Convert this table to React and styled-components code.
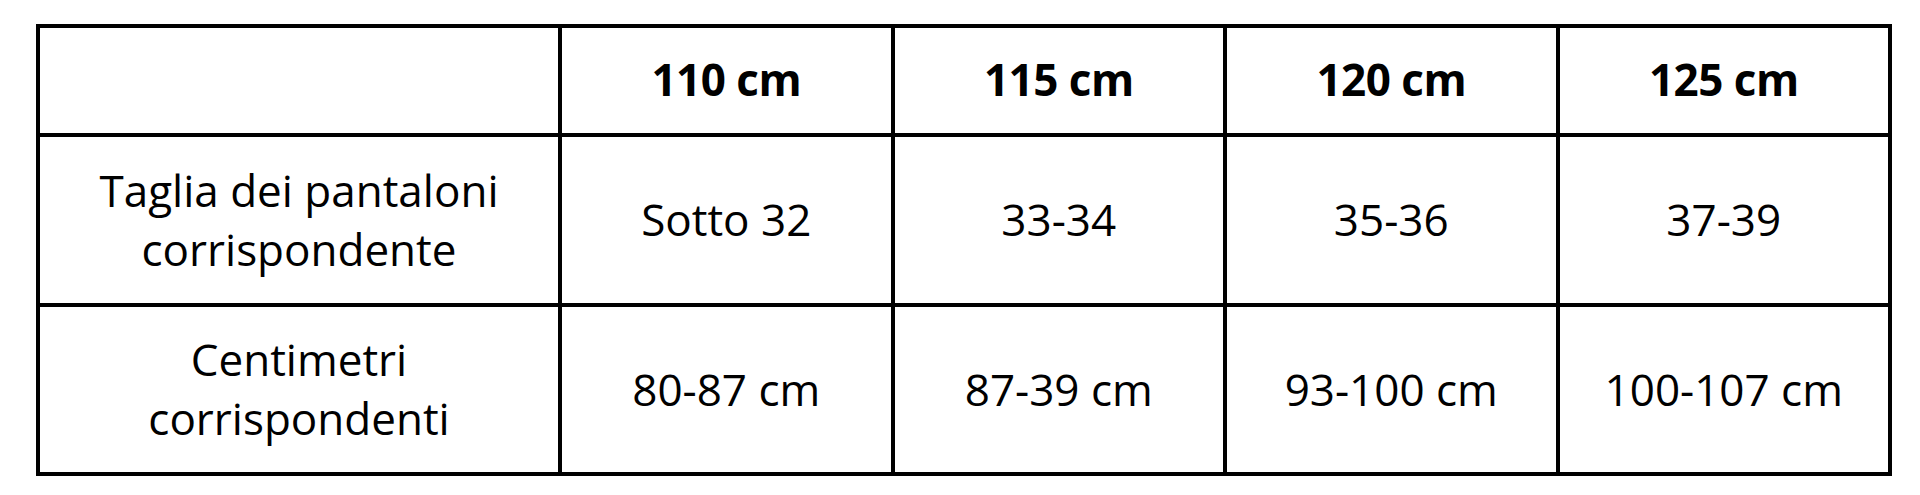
import React from "react";
import styled, { createGlobalStyle } from "styled-components";

const Global = createGlobalStyle`
  html, body { margin: 0; padding: 0; background: #ffffff; }
  body { font-family: "Open Sans", "Noto Sans", sans-serif; color: #000; }
`;

const Page = styled.div`
  padding: 24px 0 0 36px;
`;

const Grid = styled.div`
  display: grid;
  width: 1856px;
  box-sizing: border-box;
  grid-template-columns: 518px repeat(4, 328.5px);
  grid-template-rows: 105px 165.5px 165.5px;
  gap: 4px;
  padding: 4px;
  background: #000;
`;

const Cell = styled.div`
  background: #fff;
  display: flex;
  align-items: center;
  justify-content: center;
  text-align: center;
  font-size: 44px;
  line-height: 59px;
  font-weight: ${(p) => (p.$head ? 700 : 400)};
  letter-spacing: ${(p) => (p.$head ? "-0.5px" : "0")};
  padding-bottom: ${(p) => (p.$head ? "2px" : "0")};
`;

const headers = ["110 cm", "115 cm", "120 cm", "125 cm"];
const rows = [
  { label: ["Taglia dei pantaloni", "corrispondente"], values: ["Sotto 32", "33-34", "35-36", "37-39"] },
  { label: ["Centimetri", "corrispondenti"], values: ["80-87 cm", "87-39 cm", "93-100 cm", "100-107 cm"] },
];

export default function App() {
  return (
    <>
      <Global />
      <Page>
        <Grid>
          <Cell />
          {headers.map((h) => (
            <Cell key={h} $head>{h}</Cell>
          ))}
          {rows.map((r) => (
            <React.Fragment key={r.label[0]}>
              <Cell>
                {r.label[0]}
                <br />
                {r.label[1]}
              </Cell>
              {r.values.map((v) => (
                <Cell key={v}>{v}</Cell>
              ))}
            </React.Fragment>
          ))}
        </Grid>
      </Page>
    </>
  );
}
